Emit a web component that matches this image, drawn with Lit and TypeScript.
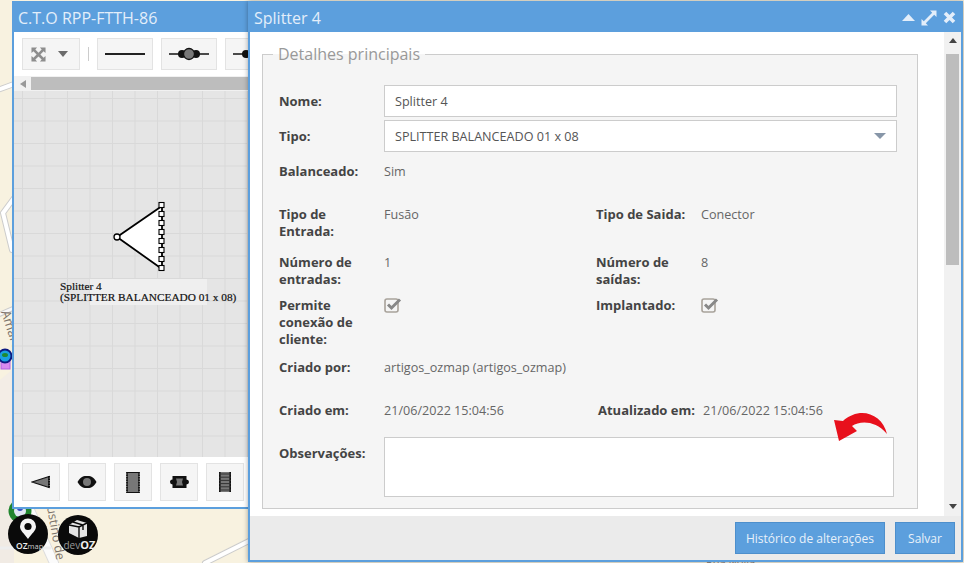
import { LitElement, html, css, svg } from "lit";
import { customElement } from "lit/decorators.js";

const checkIcon = html`
	<svg class="check" width="18" height="16" viewBox="0 0 18 16">
		<rect x="1" y="2" width="13" height="13" rx="2" fill="none" stroke="#a8a29a" stroke-width="1.6" />
		<path d="M4 7.5 L7.5 11 L16 2.5" fill="none" stroke="#888" stroke-width="3" />
	</svg>
`;

// ports on the right hand side of the splitter drawing
const ports = [0, 1, 2, 3, 4, 5, 6, 7].map((i) => 205 + i * 9);

@customElement("app-root")
export class AppRoot extends LitElement {
	static styles = css`
		:host {
			display: block;
			position: relative;
			width: 964px;
			height: 563px;
			overflow: hidden;
			background: #f8f2e0;
			font-family: "Open Sans", sans-serif;
			font-size: 12.6px;
			color: #666;
		}

		.map {
			position: absolute;
			inset: 0;
		}

		.window {
			position: absolute;
			box-sizing: border-box;
			display: flex;
			flex-direction: column;
			background: white;
			border: 2px solid #5c9fdd;
			overflow: hidden;
		}

		.window.cto {
			left: 12px;
			top: 1px;
			width: 238px;
			height: 508px;
		}

		.window.splitter {
			left: 248px;
			top: 1px;
			width: 715px;
			height: 561px;
			box-shadow: 0 0 5px rgba(0, 0, 0, 0.35);
		}

		.title-bar {
			flex: none;
			display: flex;
			align-items: center;
			justify-content: space-between;
			height: 29px;
			padding: 0 5px 0 4px;
			background: #5c9fdd;
			color: #e3eefa;
			font-size: 16px;
		}

		.controls {
			display: flex;
			align-items: center;
			gap: 6px;
		}

		.toolbar {
			flex: none;
			display: flex;
			align-items: center;
			height: 44px;
			padding: 0 0 0 8px;
			overflow: hidden;
		}

		.tool {
			flex: none;
			box-sizing: border-box;
			display: flex;
			align-items: center;
			justify-content: center;
			width: 56px;
			height: 32px;
			margin-right: 8px;
			background: #f5f5f5;
			border: 1px solid #e3e3e3;
		}

		.tool.first {
			justify-content: flex-start;
			width: 58px;
			gap: 12px;
			margin-right: 0;
			padding-left: 8px;
		}

		.sep {
			flex: none;
			width: 1px;
			height: 14px;
			margin: 0 8px;
			background: #ccc;
		}

		.hscroll {
			flex: none;
			display: flex;
			align-items: center;
			height: 15px;
			background: #f1f1f1;
		}

		.hscroll .arrow {
			width: 0;
			height: 0;
			margin: 0 5px 0 6px;
			border: 4px solid transparent;
			border-left: 0;
			border-right: 6px solid #999;
		}

		.hscroll .thumb {
			flex: 1;
			height: 13px;
			background: #bdbdbd;
		}

		.canvas {
			position: relative;
			flex: 1;
			background-color: #e5e5e5;
			background-image:
				linear-gradient(to right, #d9d9d9 1px, transparent 1px),
				linear-gradient(to bottom, #d9d9d9 1px, transparent 1px);
			background-size: 22.5px 22.5px;
			background-position: 8px 7px;
		}

		.diagram {
			position: absolute;
			left: 0;
			top: 0;
		}

		.palette {
			flex: none;
			display: flex;
			align-items: center;
			gap: 8px;
			height: 50px;
			padding-left: 8px;
		}

		.palette .tool {
			width: 38px;
			height: 38px;
			margin: 0;
		}

		.body {
			flex: 1;
			display: flex;
			min-height: 0;
		}

		.content {
			flex: 1;
			min-width: 0;
			padding: 11px 26px 0 12px;
		}

		fieldset {
			box-sizing: border-box;
			height: 466px;
			margin: 0;
			padding: 20px 20px 0 16px;
			background: #f5f5f5;
			border: 1px solid #ccc;
		}

		legend {
			padding: 0 5px;
			margin-left: -6px;
			font-size: 16px;
			line-height: 22px;
			color: #999;
		}

		.row {
			display: grid;
			grid-template-columns: 105px 212px 105px 1fr;
			line-height: 17px;
		}

		.row .lbl {
			font-size: 13px;
			font-weight: 700;
			color: #444;
		}

		.row.single {
			grid-template-columns: 105px 1fr;
		}

		.row.dates {
			grid-template-columns: 105px 214px 105px 1fr;
		}

		.field {
			box-sizing: border-box;
			display: flex;
			align-items: center;
			justify-content: space-between;
			height: 32px;
			padding: 0 10px 0 10px;
			background: white;
			border: 1px solid #ccc;
			color: #555;
		}

		.row.input {
			align-items: center;
			margin-bottom: 3px;
		}

		.caret {
			width: 0;
			height: 0;
			border: 6px solid transparent;
			border-bottom: 0;
			border-top: 6px solid #8796a8;
		}

		.notes {
			box-sizing: border-box;
			height: 60px;
			width: 510px;
			background: white;
			border: 1px solid #ccc;
		}

		.check {
			display: block;
		}

		.vscroll {
			flex: none;
			display: flex;
			flex-direction: column;
			align-items: center;
			width: 17px;
			background: #f1f1f1;
			padding-top: 6px;
			box-sizing: border-box;
		}

		.vscroll .up,
		.vscroll .down {
			width: 0;
			height: 0;
			border: 4px solid transparent;
		}

		.vscroll .up {
			border-top: 0;
			border-bottom: 5px solid #444;
		}

		.vscroll .down {
			border-bottom: 0;
			border-top: 5px solid #444;
			margin-top: auto;
			margin-bottom: 7px;
		}

		.vscroll .thumb {
			width: 13px;
			height: 211px;
			margin-top: 11px;
			background: #bdbdbd;
		}

		.footer {
			flex: none;
			display: flex;
			justify-content: flex-end;
			align-items: center;
			gap: 10px;
			height: 44px;
			padding: 0 6px 0 0;
			background: #ebebeb;
		}

		.btn {
			box-sizing: border-box;
			display: flex;
			align-items: center;
			justify-content: center;
			min-width: 60px;
			height: 32px;
			padding: 0 10px;
			background: #5c9fdd;
			border: 1px solid #4d8fcc;
			color: #e8f1fa;
			font-size: 12px;
		}

		.arrow-note {
			position: absolute;
			left: 830px;
			top: 410px;
			pointer-events: none;
		}
	`;

	private renderMap() {
		return html`
			<svg class="map" width="964" height="563" viewBox="0 0 964 563">
				<path d="M0 0H12V330L0 300Z" fill="#f8f2e0" />
				<path d="M0 380L12 370V510H0Z" fill="#f3ede6" />
				<path d="M0 480H14V563H0Z" fill="#f1ebe4" />
				<g fill="none" stroke-linecap="round">
					<path d="M-5 91L14 84" stroke="#ccc" stroke-width="6" />
					<path d="M-5 91L14 84" stroke="#fff" stroke-width="4" />
					<path d="M14 198L3 213L12 250" stroke="#ccc" stroke-width="6" />
					<path d="M14 198L3 213L12 250" stroke="#fff" stroke-width="4" />
					<path d="M-4 316L14 308" stroke="#ccc" stroke-width="5" />
					<path d="M-4 316L14 308" stroke="#f8f8f8" stroke-width="3" />
					<path d="M30 510L54 563" stroke="#ddd" stroke-width="10" />
					<path d="M30 510L54 563" stroke="#fbfbfb" stroke-width="8" />
					<path d="M0 548H50" stroke="#eee" stroke-width="3" />
					<path d="M205 563L255 538" stroke="#ccc" stroke-width="6" />
					<path d="M205 563L255 538" stroke="#fff" stroke-width="4" />
				</g>
				<text transform="translate(1 312) rotate(72)" font-family="'Open Sans', sans-serif" font-size="13" fill="#7d726a">Amaro</text>
				<text transform="translate(47 507) rotate(80)" font-family="'Open Sans', sans-serif" font-size="12.5" fill="#7d726a">ustino de</text>
				<rect x="1" y="352" width="9" height="17" fill="#d98af0" stroke="#b060e0" />
				<circle cx="5" cy="356" r="6.5" fill="#1aa0e0" stroke="#0d1a80" stroke-width="2" />
				<ellipse cx="5" cy="355" rx="3" ry="2" fill="#1f8a30" />
				<circle cx="20" cy="511" r="11.5" fill="#21852f" />
				<circle cx="20" cy="511" r="6" fill="#dfe6f5" />
				<circle cx="20" cy="508" r="3" fill="#3a4fc0" />
				<circle cx="28" cy="534" r="20" fill="#0a0a0a" />
				<path d="M28 539C24 533 20 531 20 526.5A8 8 0 0 1 36 526.5C36 531 32 533 28 539Z" fill="#f5f5f5" />
				<circle cx="28" cy="526.5" r="3.6" fill="#0a0a0a" />
				<text x="16" y="549" font-family="'Open Sans', sans-serif" font-size="8.5" fill="#eee"><tspan font-weight="600">OZ</tspan><tspan font-size="7.5" fill="#ccc">map</tspan></text>
				<circle cx="78" cy="535" r="20" fill="#0a0a0a" />
				<path d="M69 525L77 520L87 523V536L79 538L69 533Z" fill="#e5e5e5" />
				<path d="M79 526V538M69 525L79 527L87 523M73 522L83 525V530" stroke="#0a0a0a" stroke-width="1.4" fill="none" />
				<text x="63.5" y="549" font-family="'Open Sans', sans-serif" font-size="10" fill="#999">dev<tspan font-weight="700" font-size="11" fill="#eee">OZ</tspan></text>
				<text x="706" y="566" font-family="'Open Sans', sans-serif" font-size="11" fill="#8a7f76">Rua Nova</text>
			</svg>
		`;
	}

	private renderDiagram() {
		return html`
			<svg class="diagram" width="234" height="366" viewBox="14 91 234 366">
				<rect x="90" y="279" width="117" height="26" fill="#efefef" />
				<path d="M117 237L162 206V269Z" fill="white" stroke="black" stroke-width="1.8" />
				<circle cx="117" cy="237" r="3" fill="white" stroke="black" stroke-width="1.3" />
				${ports.map(
					(y) => svg`<rect x="159" y=${y - 2.5} width="5" height="5" fill="white" stroke="black" stroke-width="1.1" />`
				)}
				<text font-family="'Liberation Serif', serif" font-size="11.3" fill="#111" stroke="#111" stroke-width="0.2">
					<tspan x="60" y="290">Splitter 4</tspan>
					<tspan x="60" y="301">(SPLITTER BALANCEADO 01 x 08)</tspan>
				</text>
			</svg>
		`;
	}

	private renderToolbar() {
		return html`
			<div class="toolbar">
				<div class="tool first">
					<svg width="15" height="15" viewBox="0 0 16 16">
						<path d="M0.5 0.5H6.5L4.6 2.6L8 6L11.4 2.6L9.5 0.5H15.5V6.5L13.4 4.6L10 8L13.4 11.4L15.5 9.5V15.5H9.5L11.4 13.4L8 10L4.6 13.4L6.5 15.5H0.5V9.5L2.6 11.4L6 8L2.6 4.6L0.5 6.5Z" fill="#8e8e8e" />
					</svg>
					<svg width="10" height="6" viewBox="0 0 10 6"><path d="M0 0H10L5 6Z" fill="#6b6b6b" /></svg>
				</div>
				<div class="sep"></div>
				<div class="tool">
					<svg width="40" height="6" viewBox="0 0 40 6"><path d="M0 3H40" stroke="#222" stroke-width="2" /></svg>
				</div>
				<div class="tool">
					<svg width="40" height="14" viewBox="0 0 40 14">
						<path d="M0 7H40" stroke="#111" stroke-width="1.6" />
						<circle cx="13" cy="7" r="4" fill="#111" />
						<circle cx="27" cy="7" r="4" fill="#111" />
						<circle cx="20" cy="7" r="5.5" fill="#777" stroke="#111" stroke-width="1.3" />
					</svg>
				</div>
				<div class="tool">
					<svg width="40" height="14" viewBox="0 0 40 14">
						<path d="M0 7H40" stroke="#111" stroke-width="1.6" />
						<circle cx="13" cy="7" r="4" fill="#111" />
					</svg>
				</div>
			</div>
		`;
	}

	private renderPalette() {
		return html`
			<div class="palette">
				<div class="tool">
					<svg width="20" height="14" viewBox="0 0 20 14">
						<path d="M1 7L18 1.5V12.5Z" fill="#777" stroke="#111" stroke-width="1.2" />
						<path d="M18 1V13" stroke="#111" stroke-width="2" stroke-dasharray="1.5 1" />
					</svg>
				</div>
				<div class="tool">
					<svg width="20" height="14" viewBox="0 0 20 14">
						<path d="M0.5 7C4 1 7 1 10 1C13 1 16 1 19.5 7C16 13 13 13 10 13C7 13 4 13 0.5 7Z" fill="#111" />
						<circle cx="10" cy="7" r="4" fill="#777" />
					</svg>
				</div>
				<div class="tool">
					<svg width="14" height="21" viewBox="0 0 14 21">
						<rect x="1" y="0.5" width="12" height="20" fill="#777" stroke="#111" />
						<path d="M1 0V21M13 0V21" stroke="#111" stroke-width="1.6" stroke-dasharray="1.5 1" />
					</svg>
				</div>
				<div class="tool">
					<svg width="19" height="14" viewBox="0 0 19 14">
						<path d="M2.5 1H16.5V4.5A2.5 2.5 0 0 1 16.5 9.5V13H2.5V9.5A2.5 2.5 0 0 1 2.5 4.5Z" fill="#111" />
						<path d="M6 3.5H13L12 7L13 10.5H6L7 7Z" fill="#777" />
					</svg>
				</div>
				<div class="tool">
					<svg width="12" height="20" viewBox="0 0 12 20">
						<rect x="0" y="0" width="12" height="20" fill="#777" />
						<path d="M0.8 0V20M11.2 0V20" stroke="#111" stroke-width="1.6" />
						<path d="M0 2H12M0 5.2H12M0 8.4H12M0 11.6H12M0 14.8H12M0 18H12" stroke="#333" stroke-width="1" />
					</svg>
				</div>
			</div>
		`;
	}

	private renderDetails() {
		return html`
			<fieldset>
				<legend>Detalhes principais</legend>
				<div class="row single input">
					<div class="lbl">Nome:</div>
					<div class="field">Splitter 4</div>
				</div>
				<div class="row single input">
					<div class="lbl">Tipo:</div>
					<div class="field">SPLITTER BALANCEADO 01 x 08<span class="caret"></span></div>
				</div>
				<div class="row single" style="margin-top:11px;height:43px">
					<div class="lbl">Balanceado:</div>
					<div>Sim</div>
				</div>
				<div class="row" style="height:48px">
					<div class="lbl">Tipo de<br />Entrada:</div>
					<div>Fusão</div>
					<div class="lbl">Tipo de Saida:</div>
					<div>Conector</div>
				</div>
				<div class="row" style="height:43px">
					<div class="lbl">Número de<br />entradas:</div>
					<div>1</div>
					<div class="lbl">Número de<br />saídas:</div>
					<div>8</div>
				</div>
				<div class="row" style="height:62px">
					<div class="lbl">Permite<br />conexão de<br />cliente:</div>
					<div>${checkIcon}</div>
					<div class="lbl">Implantado:</div>
					<div>${checkIcon}</div>
				</div>
				<div class="row single" style="height:43px">
					<div class="lbl">Criado por:</div>
					<div>artigos_ozmap (artigos_ozmap)</div>
				</div>
				<div class="row dates" style="height:35px">
					<div class="lbl">Criado em:</div>
					<div>21/06/2022 15:04:56</div>
					<div class="lbl">Atualizado em:</div>
					<div>21/06/2022 15:04:56</div>
				</div>
				<div class="row single">
					<div class="lbl" style="margin-top:8px">Observações:</div>
					<div class="notes"></div>
				</div>
			</fieldset>
		`;
	}

	render() {
		return html`
			${this.renderMap()}
			<section class="window cto">
				<div class="title-bar">C.T.O RPP-FTTH-86</div>
				${this.renderToolbar()}
				<div class="hscroll"><span class="arrow"></span><span class="thumb"></span></div>
				<div class="canvas">${this.renderDiagram()}</div>
				${this.renderPalette()}
			</section>
			<section class="window splitter">
				<div class="title-bar">
					Splitter 4
					<div class="controls">
						<svg width="13" height="7" viewBox="0 0 13 7"><path d="M0 7L6.5 0L13 7Z" fill="#e3eefa" /></svg>
						<svg width="16" height="16" viewBox="0 0 16 16">
							<path d="M9 0.5H15.5V7L13.2 4.8L4.8 13.2L7 15.5H0.5V9L2.8 11.2L11.2 2.8Z" fill="#e3eefa" />
						</svg>
						<svg width="13" height="13" viewBox="0 0 13 13"><path d="M2 2L11 11M11 2L2 11" stroke="#e3eefa" stroke-width="3.6" /></svg>
					</div>
				</div>
				<div class="body">
					<div class="content">${this.renderDetails()}</div>
					<div class="vscroll">
						<span class="up"></span>
						<span class="thumb"></span>
						<span class="down"></span>
					</div>
				</div>
				<div class="footer">
					<div class="btn">Histórico de alterações</div>
					<div class="btn">Salvar</div>
				</div>
			</section>
			<svg class="arrow-note" width="60" height="34" viewBox="830 410 60 34">
				<path d="M887 434C884 420 872 412 860 413C853 414 847 417 843 421L834 420L839 441L857 431L852 426C860 421 875 420 887 434Z" fill="#e8101c" />
			</svg>
		`;
	}
}
